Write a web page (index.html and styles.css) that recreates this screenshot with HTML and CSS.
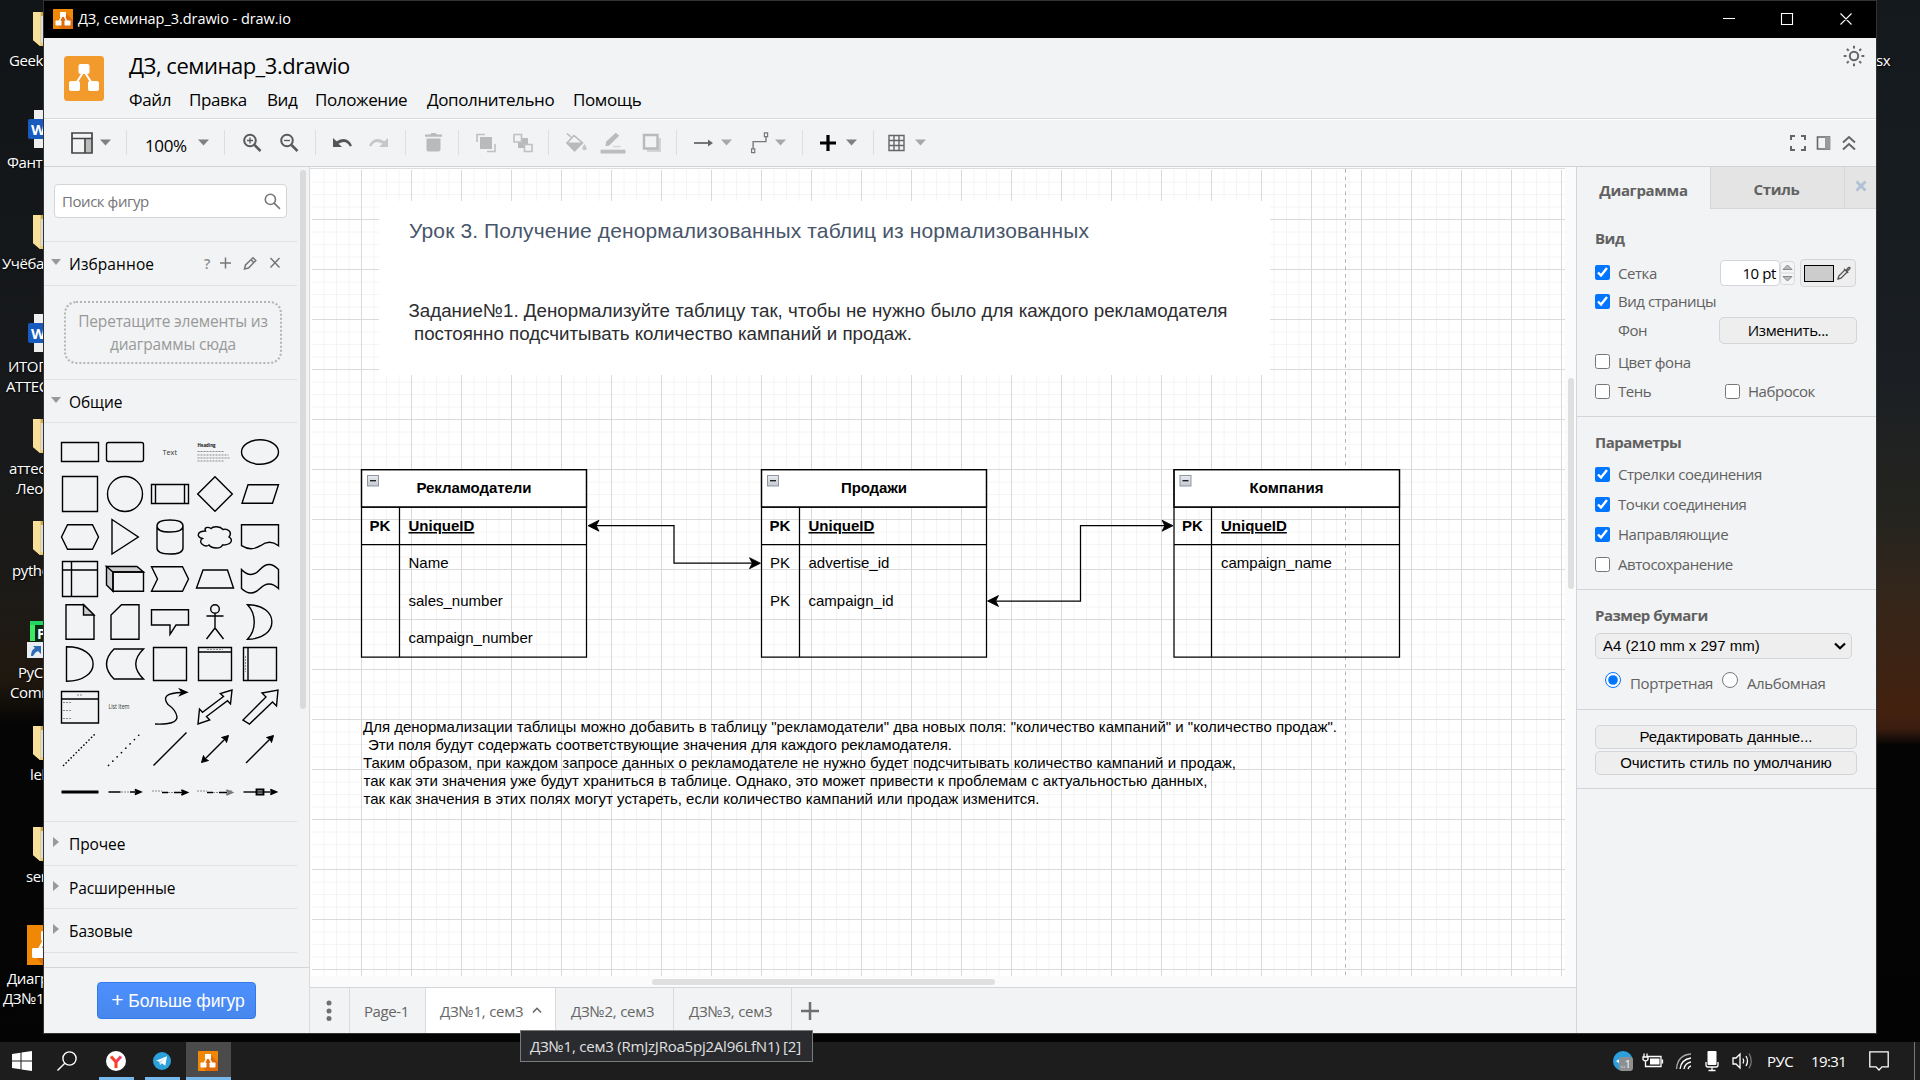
FILE: index.html
```html
<!DOCTYPE html>
<html lang="ru">
<head>
<meta charset="utf-8">
<title>ДЗ, семинар_3.drawio - draw.io</title>
<link rel="stylesheet" href="styles.css">
</head>
<body>
<svg class="defs" width="0" height="0">
  <symbol id="drawio" viewBox="0 0 20 20">
    <rect width="20" height="20" fill="#f08705"/>
    <path d="M12 3.5 20 11v9H8l-4-4.5z" fill="#df6c0c"/>
    <path d="M10 5 5.5 13.5M10 5l4.500 8.500" stroke="#fff" stroke-width="1.500"/>
    <g fill="#fff"><rect x="7" y="3" width="6" height="5" rx=".7"/><rect x="2.500" y="11.500" width="6" height="5" rx=".7"/><rect x="11.500" y="11.500" width="6" height="5" rx=".7"/></g>
  </symbol>
  <symbol id="folder" viewBox="0 0 22 36">
    <path d="M0 1h22v34H7L0 29z" fill="#e9cb79"/><path d="M0 1h7v34L0 29z" fill="#f8e09a"/><path d="M8 4h14v28H8z" fill="#d9dde2"/><path d="M8 1h14v4H8z" fill="#c9a550"/>
  </symbol>
  <symbol id="word" viewBox="0 0 22 38">
    <rect x="6" y="0" width="16" height="38" fill="#eee"/><rect y="9" width="22" height="20" rx="2" fill="#185abd"/>
    <text x="3" y="24.500" font-family="Open Sans" font-weight="700" font-size="15" fill="#fff">W</text>
  </symbol>
  <symbol id="caret" viewBox="0 0 11 7"><path d="M0 .5h11L5.500 6.500z"/></symbol>
</svg>

<main class="desktop">
  <svg class="dicon i1"><use href="#folder"/></svg><span class="dlabel l1">Geek</span>
  <svg class="dicon wd i2"><use href="#word"/></svg><span class="dlabel l2">Фанты</span>
  <svg class="dicon i3"><use href="#folder"/></svg><span class="dlabel l3">Учёба</span>
  <svg class="dicon wd i4"><use href="#word"/></svg><span class="dlabel l4">ИТОГО</span><span class="dlabel l5">АТТЕС</span>
  <svg class="dicon i5"><use href="#folder"/></svg><span class="dlabel l6">аттест</span><span class="dlabel l7">Леон</span>
  <svg class="dicon i6"><use href="#folder"/></svg><span class="dlabel l8">python</span>
  <svg class="dicon i7" viewBox="0 0 22 38"><path d="M3 0h19v20H3z" fill="#3bea62"/><path d="M3 0h19v4H3z" fill="#21d760"/><path d="M8 4h14v18H8z" fill="#0c2a12"/><text x="10" y="18" font-family="Open Sans" font-weight="700" font-size="14" fill="#fff">P</text><path d="M0 21h22v16H0z" fill="#e8edf2"/><path d="m4 35q0-6 4-8l-2-2h8v8l-3-3q-3 1-5 5z" fill="#2c6cb5"/></svg><span class="dlabel l9">PyCharm</span><span class="dlabel l10">Comm</span>
  <svg class="dicon i8"><use href="#folder"/></svg><span class="dlabel l11">lek</span>
  <svg class="dicon i9"><use href="#folder"/></svg><span class="dlabel l12">sem</span>
  <svg class="dicon dio i10"><use href="#drawio"/></svg><span class="dlabel l13">Диагра</span><span class="dlabel l14">ДЗ№1</span>
  <span class="dlabel l15">sx</span>

  <section class="window">
    <header class="titlebar">
      <svg class="app-icon"><use href="#drawio"/></svg>
      <span class="caption">ДЗ, семинар_3.drawio - draw.io</span>
      <svg class="win-buttons" viewBox="0 0 130 14"><path d="M0 6.500h12M58.500 1.500h11v11h-11zM117.500 1.500l11 11M128.500 1.500l-11 11"/></svg>
    </header>

    <div class="head">
      <svg class="logo" viewBox="0 0 40 45"><rect width="40" height="45" rx="3.500" fill="#f29a2b"/><path d="M20 15 11 29M20 15l9 14" stroke="#fff" stroke-width="2"/><g fill="#fff"><rect x="14.500" y="8" width="11" height="10" rx="2"/><rect x="5" y="25" width="11" height="10" rx="2"/><rect x="24" y="25" width="11" height="10" rx="2"/></g></svg>
      <div class="names">
        <h1 class="filename">ДЗ, семинар_3.drawio</h1>
        <nav class="menu"><span class="m1">Файл</span><span class="m2">Правка</span><span class="m3">Вид</span><span class="m4">Положение</span><span class="m5">Дополнительно</span><span>Помощь</span></nav>
      </div>
      <svg class="sun" viewBox="-11 -11 22 22"><circle r="4.200"/><path d="M0-7.500V-10.300M0 7.500v2.800M7.500 0h2.800M-7.500 0h-2.800M5.300 5.300l1.800 1.800M-5.300 5.300l-1.800 1.800M5.300-5.300l1.800-1.800M-5.300-5.300l-1.800-1.800"/></svg>
    </div>

    <div class="toolbar">
      <svg class="t w22" viewBox="0 0 22 22"><path d="M14.500 7h6v13.500h-6z" fill="#bbb"/><path d="M1 1h20v20H1zM1 6.500h20M14 6.500V21" fill="none" stroke="#444" stroke-width="1.700"/></svg>
      <svg class="caret g7"><use href="#caret"/></svg><i class="sep g15"></i>
      <span class="zoom">100%</span><svg class="caret g11"><use href="#caret"/></svg><i class="sep g15"></i>
      <svg class="t w19 g18 dk" viewBox="0 0 19 19"><circle cx="7" cy="7" r="5.800"/><path d="M4 7h6M7 4v6" stroke-width="1.300"/><path d="m11.500 11.500 6 6" stroke-width="2.500"/></svg>
      <svg class="t w19 g18 dk" viewBox="0 0 19 19"><circle cx="7" cy="7" r="5.800"/><path d="M4 7h6" stroke-width="1.300"/><path d="m11.500 11.500 6 6" stroke-width="2.500"/></svg><i class="sep g16"></i>
      <svg class="t w20 g16" viewBox="0 0 20 20"><path d="M1 5v9h9L6.500 10.800Q14 6 17.800 13.500L20 12.800Q15.500 2 4.500 8.300z" fill="#555"/></svg>
      <svg class="t w20 g17" viewBox="0 0 20 20"><path d="M19 5v9h-9l3.500-3.200Q6 6 2.200 13.500L0 12.800Q4.500 2 15.500 8.300z" fill="#c6c7c9"/></svg><i class="sep g16"></i>
      <svg class="t w20 g18" viewBox="0 0 20 20"><path d="M1 1.500h5L7.500 0h4L13 1.500h5v2.300H1zM2.500 5.500h14v11q0 2-2 2h-10q-2 0-2-2z" fill="#b9babc"/></svg><i class="sep g14"></i>
      <svg class="t w20 g17" viewBox="0 0 20 20"><path d="M1 9V1.500h8M19 11v7.500h-8" fill="none" stroke="#bfc0c2" stroke-width="1.600"/><rect x="4" y="4" width="12" height="12" fill="#b9babc"/></svg>
      <svg class="t w20 g17" viewBox="0 0 20 20"><rect x="5" y="5" width="10" height="10" fill="#b9babc"/><path d="M1 1.500h7.500V9H1zM11.500 11.500H19v7h-7.500z" fill="#f1f3f4" stroke="#bfc0c2" stroke-width="1.600"/></svg><i class="sep g15"></i>
      <svg class="t w21 g17" viewBox="0 0 21 21"><path d="m1 1 4 3.500M8 3 1 10.500l7.500 7.800 8-8z" fill="none" stroke="#b9babc" stroke-width="1.600"/><path d="M1 10h15.500l-8 8.300z" fill="#b9babc"/><path d="M18.500 11.500q4.500 6 0 6.200-4.500-.2 0-6.200z" fill="#c6c7c9"/></svg>
      <svg class="t w26 g13" viewBox="0 0 26 23"><path d="m5 15 1-5L16 .8 19.500 4 9 14z" fill="#b9babc"/><path d="M13 15.200h8" stroke="#d5d6d8" stroke-width="1.500"/><path d="M0 20.500h26" stroke="#bcbdbf" stroke-width="4"/></svg>
      <svg class="t w20 g16" viewBox="0 0 20 20"><path d="M5 5h14v14H5z" fill="#d2d3d5"/><path d="M2 2h13.500v13.500H2z" fill="#f1f3f4" stroke="#b9babc" stroke-width="2.400"/></svg><i class="sep g14"></i>
      <svg class="t w20 g17" viewBox="0 0 20 20"><path d="M0 10h16" stroke="#777" stroke-width="2"/><path d="m14 6.500 5 3.500-5 3.500z" fill="#666"/></svg><svg class="caret lt g7"><use href="#caret"/></svg>
      <svg class="t w20 g18" viewBox="0 0 20 24"><path d="M2.500 18v-7.500h14V5" fill="none" stroke="#777" stroke-width="1.500"/><path d="M.8 18.500h3.500v4H.8zM14.800 1h3.500v4h-3.500z" fill="#f1f3f4" stroke="#777" stroke-width="1.300"/></svg><svg class="caret lt g5"><use href="#caret"/></svg><i class="sep g16"></i>
      <svg class="t w16 g17" viewBox="0 0 16 16"><path d="M0 8h16M8 0v16" stroke="#000" stroke-width="3.200"/></svg><svg class="caret g10"><use href="#caret"/></svg><i class="sep g16"></i>
      <svg class="t w17 g14" viewBox="0 0 17 17"><path d="M1 1h15v15H1zM1 6h15M1 11h15M6 1v15M11 1v15" fill="none" stroke="#666" stroke-width="1.400"/></svg><svg class="caret lt g10"><use href="#caret"/></svg>
      <svg class="t right" viewBox="0 0 66 16"><g fill="none" stroke="#666" stroke-width="2"><path d="M1 5V1h4M11 1h4v4M15 11v4h-4M5 15H1v-4"/><path d="M27.500 2h12v12h-12z" stroke-width="1.600"/><path d="m53 7.500 6-5.500 6 5.500M53 14.500 59 9l6 5.500"/></g><path d="M35 2h5v12h-5z" fill="#999"/></svg>
    </div>

    <div class="body">
      <aside class="sidebar">
        <div class="scroll">
          <div class="search"><span>Поиск фигур</span><svg viewBox="0 0 16 16"><circle cx="6" cy="6" r="4.800"/><path d="m9.500 9.500 5.500 5.500"/></svg></div>
          <div class="pal fav"><b class="tri dn"></b><span>Избранное</span>
            <svg class="fav-tools" viewBox="0 0 78 14"><text x="0" y="12.500" font-size="14" font-weight="600" fill="#8b8b8b">?</text><g fill="none" stroke="#777" stroke-width="1.500"><path d="M16 7h11M21.500 1.500v11M66.500 2l9 9.500M75.500 2l-9 9.500"/><path d="m40.500 13 1-4L49 1.700 51.800 4.500 44.500 12zM47 3.800l2.800 2.800"/></g></svg></div>
          <div class="dropwrap"><div class="drop">Перетащите элементы из диаграммы сюда</div></div>
          <div class="pal gen"><b class="tri dn"></b><span>Общие</span></div>
          <div class="shapes">
            <svg viewBox="-22 -21 45 42"><path d="M-18.500-9.500h37v19h-37z"/></svg>
            <svg viewBox="-22 -21 45 42"><rect x="-18.500" y="-9.500" width="37" height="19" rx="2"/></svg>
            <svg viewBox="-22 -21 45 42"><text x="-7.500" y="2.500" font-size="7.500" textLength="14.500" lengthAdjust="spacingAndGlyphs">Text</text></svg>
            <svg viewBox="-22 -21 45 42"><text x="-17.500" y="-5" font-size="5.500" class="hb" textLength="18" lengthAdjust="spacingAndGlyphs">Heading</text><path d="M-17.500-.5h27M-17.500 3h31M-17.500 6h32M-17.500 9h26" class="fine"/></svg>
            <svg viewBox="-22 -21 45 42"><ellipse rx="18.500" ry="12.300"/></svg>

            <svg viewBox="-22 -21 45 42"><path d="M-17.500-17.500h35v35h-35z"/></svg>
            <svg viewBox="-22 -21 45 42"><circle r="17.500"/></svg>
            <svg viewBox="-22 -21 45 42"><path d="M-18.500-9.500h37v19h-37zM-14.500-9.500v19M14.500-9.500v19"/></svg>
            <svg viewBox="-22 -21 45 42"><path d="M0-17.300 17.300 0 0 17.300-17.300 0z"/></svg>
            <svg viewBox="-22 -21 45 42"><path d="M-12-9.200h30.500l-6 18.400H-18z"/></svg>

            <svg viewBox="-22 -21 45 42"><path d="M-12.500-12.300h25L18.500 0l-6 12.300h-25L-18.500 0z"/></svg>
            <svg viewBox="-22 -21 45 42"><path d="M-13-17.500 13.300 0-13 17z"/></svg>
            <svg viewBox="-22 -21 45 42"><path d="M-13-11v22q0 6 13 6t13-6v-22M-13-11q0-6 13-6t13 6-13 6-13-6z"/></svg>
            <svg viewBox="-22 -21 45 42"><path d="M-9.500-6C-18-6-19 0-12.500 1.500-18 5-10 11-6 8-3 12 6 12 7.500 8 16 8 19 3 14 0 18-5 12-9 8-7.500 5-11-2-11-4-8.500-8-11-11-9-9.500-6z"/></svg>
            <svg viewBox="-22 -21 45 42"><path d="M-18.500-12.300h37v21q-9-7-18 0-9.500 6-19 0z"/></svg>

            <svg viewBox="-22 -21 45 42"><path d="M-17.500-17.500h35v35h-35zM-8.500-17.500v35M-17.500-9h35"/></svg>
            <svg viewBox="-22 -21 45 42"><path d="M-18.500-12.500-12-7V12.300L-18.500 6zM-18.500-12.500H12L18.500-7H-12z" fill="#ccc"/><path d="M-12-7h30.500v19.300H-12z"/></svg>
            <svg viewBox="-22 -21 45 42"><path d="M-18.500-12.300H12.500L18.500 0l-6 12.300h-31L-12.500 0z"/></svg>
            <svg viewBox="-22 -21 45 42"><path d="M-12-9h24.500l6 18h-37z"/></svg>
            <svg viewBox="-22 -21 45 42"><path d="M-18.500-9.500q9.500 10 18.500 0t18.500 0v19q-9.500-9-18.500 0t-18.500 0z"/></svg>

            <svg viewBox="-22 -21 45 42"><path d="M-14-17.300H3.500L14-7v24.300h-28z"/><path d="M3.500-17.300V-7H14z" fill="#ccc"/></svg>
            <svg viewBox="-22 -21 45 42"><path d="M-3.500-17.300H14v34.600h-28V-7z"/></svg>
            <svg viewBox="-22 -21 45 42"><path d="M-18.500-12.300h37V3H6L0 12.300V3h-18.500z"/></svg>
            <svg viewBox="-22 -21 45 42"><circle cy="-13" r="4.300"/><path d="M0-8.500V6M-8.500-6h17M-8.500 17 0 6l8.500 11"/></svg>
            <svg viewBox="-22 -21 45 42"><path d="M-12.500-17.300C20-17.300 20 17-12.500 17.300-3.500 8-3.500-8-12.500-17.300z"/></svg>

            <svg viewBox="-22 -21 45 42"><path d="M-13.500-17.300C22-17.300 22 17-13.500 17.300z"/></svg>
            <svg viewBox="-22 -21 45 42"><path d="M-11-15h29.500q-15.500 15 0 30H-11q-15-15 0-30z"/></svg>
            <svg viewBox="-22 -21 45 42"><path d="M-16.500-16.500h33v33h-33z"/></svg>
            <svg viewBox="-22 -21 45 42"><path d="M-16.500-16.500h33v33h-33zM-16.500-12h33"/><path class="fine" d="M-8-14.500H8"/></svg>
            <svg viewBox="-22 -21 45 42"><path d="M-16.500-16.500h33v33h-33zM-12-16.500v33"/><path class="fine" d="M-14.500-8V8"/></svg>

            <svg viewBox="-22 -21 45 42"><path d="M-18.500-15.500h37v31.500h-37zM-18.500-8h37"/><path class="fine" d="M-3-12h6M-17-4.500h9M-17 3.500h9M-17 11.500h9"/></svg>
            <svg viewBox="-22 -21 45 42"><text x="-16.500" y="2" font-size="6.300" textLength="21" lengthAdjust="spacingAndGlyphs">List Item</text></svg>
            <svg viewBox="-22 -21 45 42"><path d="M-15 17Q7 18 7 10 6 3-2-2.500-11-14 12-14.500"/><path d="m17-14.700-7-3 2 3-2 3z" fill="#000"/></svg>
            <svg viewBox="-22 -21 45 42"><path d="m-17 17 1.500-15 3 3.200L8.500-10.500l-3.200-3L17-17l-1.500 14-3-3.200L-8.500 9.500l3.200 3.500z"/></svg>
            <svg viewBox="-22 -21 45 42"><path d="m-17 13 23-23-4-4 16-3-1.500 16-4-4-23 22z"/></svg>

            <svg viewBox="-22 -21 45 42"><path d="M-16.500 16.500 16.500-16.500" class="dot a"/></svg>
            <svg viewBox="-22 -21 45 42"><path d="M-16.500 16.500 16.500-16.500" class="dot b"/></svg>
            <svg viewBox="-22 -21 45 42"><path d="M-16.500 16.500 16.500-16.500"/></svg>
            <svg viewBox="-22 -21 45 42"><path d="M-12 12 12-12"/><path d="m-13.500 13.500 2-7 1.500 3.500 3.500 1.500zM13.500-13.500l-7 2 3.500 1.500 1.500 3.500z" fill="#000" stroke-width="1"/></svg>
            <svg viewBox="-22 -21 45 42"><path d="M-14 14 12-12"/><path d="m13.500-13.500-7 2 3.500 1.500 1.500 3.500z" fill="#000" stroke-width="1"/></svg>

            <svg viewBox="-22 -21 45 42"><path d="M-18.500 0h37" stroke-width="3"/></svg>
            <svg viewBox="-22 -21 45 42"><path d="M-16.500 0h12M5 0h8"/><path class="fine" d="M-4 0h8"/><path d="m16-0-6-2.500L12 0l-2 2.500z" fill="#000"/></svg>
            <svg viewBox="-22 -21 45 42"><path d="M-8 .5h6M4 .5h10"/><path class="fine" d="M-18-1h10M-2 .5h6"/><path d="m17.500.5-6-2.500 2 2.500-2 2.500z" fill="#000"/></svg>
            <svg viewBox="-22 -21 45 42"><path d="M-8 .5h6M4 .5h8"/><path class="fine" d="M-18-1h10M-2 .5h6M12-1h6"/><path d="m17.500.5-6-2.500 2 2.500-2 2.500z" fill="#999" stroke="#777"/></svg>
            <svg viewBox="-22 -21 45 42"><path d="M-16.500 0h31"/><path d="M-3.500-2.500h7v5h-7z" stroke-width="1.800"/><path d="m16.500 0-6-2.500 2 2.500-2 2.500z" fill="#000"/></svg>
          </div>
          <div class="pal"><b class="tri rt"></b><span>Прочее</span></div>
          <div class="pal short"><b class="tri rt"></b><span>Расширенные</span></div>
          <div class="pal"><b class="tri rt"></b><span>Базовые</span></div>
          <div class="rest"></div>
          <i class="thumb"></i>
        </div>
        <footer class="more"><button><b>+</b> Больше фигур</button></footer>
      </aside>

      <section class="center">
        <svg class="canvas" viewBox="310 167 1266 820">
          <defs>
            <pattern id="grid" x="361" y="219" width="50" height="50" patternUnits="userSpaceOnUse">
              <path d="M13 0v50M25.500 0v50M38 0v50M0 13h50M0 25.500h50M0 38h50" stroke="#f4f4f4"/>
              <path d="M.5 0v50M0 .5h50" stroke="#dadada"/>
            </pattern>
            <linearGradient id="fold" x2="0" y2="1"><stop stop-color="#e8ebf0"/><stop offset="1" stop-color="#c3c8d0"/></linearGradient>
            <g id="collapse"><rect x=".5" y=".5" width="11" height="10.500" fill="url(#fold)" stroke="#8e96a3"/><path d="M3 5.700h6" stroke="#222" stroke-width="1.400"/></g>
          </defs>
          <path d="M310 167h1266v820H310z" fill="#fbfbfb"/>
          <path d="M311 169h1254v807H311z" fill="#fff"/>
          <path d="M312 170h1253v806H312z" fill="url(#grid)"/>
          <path d="M310 168.500h1255" stroke="#dcdddf"/>
          <path d="M1345.500 169v807" stroke="#b4b4b4" stroke-dasharray="3.750 3.750"/>
          <path d="M379 201h891v174H379z" fill="#fff"/>
          <text class="lesson" x="409" y="237.500" textLength="680">Урок 3. Получение денормализованных таблиц из нормализованных</text>
          <g class="task"><text x="408.500" y="317" textLength="819">Задание№1. Денормализуйте таблицу так, чтобы не нужно было для каждого рекламодателя</text>
          <text x="414" y="340" textLength="498">постоянно подсчитывать количество кампаний и продаж.</text></g>
          <g class="tbl">
            <path d="M361.500 469.500h225V507h-225zM761.500 469.500h225V507h-225zM1174 469.500h225.500V507H1174z" fill="#fff"/>
            <path d="M361.500 469.500h225v187.500h-225zM361.500 507h225M361.500 544.500h225M399.500 507v150M761.500 469.500h225v187.500h-225zM761.500 507h225M761.500 544.500h225M799.500 507v150M1174 469.500h225.500v187.500H1174zM1174 507h225.500M1174 544.500h225.500M1211.500 507v150" />
            <path d="M594 525.700h80v37.500h80M994 601h86.500v-75.300h86"/>
            <path d="m588 525.700 11-5.500-2.800 5.500 2.800 5.500zM760.500 563.200l-11-5.500 2.800 5.500-2.800 5.500zM987.500 601l11-5.500-2.800 5.500 2.800 5.500zM1173 525.700l-11-5.500 2.800 5.500-2.800 5.500z" fill="#000" stroke-width=".8"/>
          </g>
          <use href="#collapse" x="367" y="475"/><use href="#collapse" x="767" y="475"/><use href="#collapse" x="1179.500" y="475"/>
          <g class="txt b">
            <text x="416.500" y="493" textLength="115">Рекламодатели</text><text x="841" y="493" textLength="66">Продажи</text><text x="1249.500" y="493" textLength="74">Компания</text>
            <text x="369.500" y="531">PK</text><text x="769.500" y="531">PK</text><text x="1182" y="531">PK</text>
            <g text-decoration="underline"><text x="408.500" y="531">UniqueID</text><text x="808.500" y="531">UniqueID</text><text x="1221" y="531">UniqueID</text></g>
          </g>
          <g class="txt">
            <text x="408.500" y="568">Name</text><text x="408.500" y="606">sales_number</text><text x="408.500" y="643">campaign_number</text>
            <text x="770" y="568">PK</text><text x="770" y="606">PK</text><text x="808.500" y="568">advertise_id</text><text x="808.500" y="606">campaign_id</text>
            <text x="1221" y="568">campaign_name</text>
            <text x="363" y="732" textLength="974">Для денормализации таблицы можно добавить в таблицу "рекламодатели" два новых поля: "количество кампаний" и "количество продаж".</text>
            <text x="368" y="750" textLength="584">Эти поля будут содержать соответствующие значения для каждого рекламодателя.</text>
            <text x="363" y="768" textLength="873">Таким образом, при каждом запросе данных о рекламодателе не нужно будет подсчитывать количество кампаний и продаж,</text>
            <text x="363.500" y="786" textLength="844">так как эти значения уже будут храниться в таблице. Однако, это может привести к проблемам с актуальностью данных,</text>
            <text x="363.500" y="804" textLength="676">так как значения в этих полях могут устареть, если количество кампаний или продаж изменится.</text>
          </g>
          <rect x="1568" y="378" width="6" height="211" rx="3" fill="#dfdfdf"/>
          <rect x="652" y="979" width="343" height="6" rx="3" fill="#dfdfdf"/>
        </svg>
        <div class="pages">
          <svg class="dots" viewBox="0 0 6 22"><circle cx="3" cy="3" r="2.500"/><circle cx="3" cy="11" r="2.500"/><circle cx="3" cy="18.500" r="2.500"/></svg>
          <span class="pg p1">Page-1</span>
          <span class="pg p2">ДЗ№1, сем3 <svg viewBox="0 0 10 6"><path d="M1 5.500 5 1.300 9 5.500"/></svg></span>
          <span class="pg p3">ДЗ№2, сем3</span><span class="pg p4">ДЗ№3, сем3</span>
          <svg class="add" viewBox="0 0 18 18"><path d="M0 9h18M9 0v18"/></svg>
        </div>
      </section>

      <aside class="format">
        <div class="tabs"><span class="on">Диаграмма</span><span class="off">Стиль</span><span class="cl"><svg viewBox="0 0 12 12"><path d="m1.500 1.500 9 9M10.500 1.500l-9 9"/></svg></span></div>
        <section class="s1">
          <h2>Вид</h2>
          <div class="row r1"><label><input type="checkbox" checked>Сетка</label>
            <span class="num">10 pt</span><svg class="spin" viewBox="0 0 15 24"><rect x=".5" y=".5" width="14" height="23" rx="3" fill="#f3f4f5" stroke="#d8dadc"/><path d="M.5 12h14" stroke="#d8dadc"/><path d="m3 8.500 4.500-4.500L12 8.500zM3 15.500h9L7.500 20z" fill="#bbb" stroke="#888"/></svg>
            <span class="color"><i></i><svg viewBox="0 0 14 14"><path d="M1 13l.8-3L8 3.800 10.200 6 4 12.200zM7 2.800 11.200 7M9 4.500 11.500 1.500Q12.800.8 13 2.500L10 5.500" fill="none" stroke="#555" stroke-width="1.300"/></svg></span></div>
          <div class="row r2"><label><input type="checkbox" checked>Вид страницы</label></div>
          <div class="row r3"><label class="nobox">Фон</label><button class="change">Изменить...</button></div>
          <div class="row r4"><label><input type="checkbox">Цвет фона</label></div>
          <div class="row"><label class="half"><input type="checkbox">Тень</label><label><input type="checkbox">Набросок</label></div>
        </section>
        <section class="s2">
          <h2>Параметры</h2>
          <div class="row"><label><input type="checkbox" checked>Стрелки соединения</label></div>
          <div class="row"><label><input type="checkbox" checked>Точки соединения</label></div>
          <div class="row"><label><input type="checkbox" checked>Направляющие</label></div>
          <div class="row"><label><input type="checkbox">Автосохранение</label></div>
        </section>
        <section class="s3">
          <h2>Размер бумаги</h2>
          <div class="select"><span>A4 (210 mm x 297 mm)</span><svg viewBox="0 0 12 8"><path d="m1 1.500 5 4.800 5-4.800"/></svg></div>
          <div class="radios"><label class="ra"><input type="radio" name="o" checked><span>Портретная</span></label><label><input type="radio" name="o"><span>Альбомная</span></label></div>
        </section>
        <section class="s4"><button>Редактировать данные...</button><button>Очистить стиль по умолчанию</button></section>
      </aside>
    </div>
  </section>

  <footer class="taskbar">
    <svg class="start" viewBox="0 0 20 20"><path d="m0 3 8.500-1.200v7.700H0zM9.500 1.600 20 0v9.500H9.500zM0 10.500h8.500v7.700L0 17zM9.500 10.500H20V20L9.500 18.400z" fill="#fff"/></svg>
    <svg class="find" viewBox="0 0 20 20"><circle cx="12.500" cy="7.500" r="6.600"/><path d="M7.800 12.300.5 19.500"/></svg>
    <span class="app a1"><svg viewBox="0 0 20 20"><circle cx="10" cy="10" r="10" fill="#fff"/><path d="M5 5.500 10 11v6" fill="none" stroke="#fc3f1d" stroke-width="3"/><path d="m10 11 5-5.500" stroke="#f33b6a" stroke-width="3"/></svg></span>
    <span class="app a2"><svg viewBox="0 0 20 20"><circle cx="10" cy="10" r="9" fill="#2aa1da"/><path d="M4 9.800 15 5.200 13.300 14.800 9.800 12.300 8 14 7.500 10.800z" fill="#fff"/><path d="m7.500 10.800 6-4.200-4.500 5-1 2.400z" fill="#b9daec"/></svg></span>
    <span class="app a3"><svg><use href="#drawio"/></svg></span>
    <div class="tray">
      <svg class="icons" viewBox="0 0 140 22"><circle cx="10" cy="11" r="10" fill="#2ba0dd"/><path d="m3 11 4-2v5z" fill="#fff"/><rect x="6" y="7" width="14" height="14" rx="3" fill="#8d8f91"/><text x="12" y="17.500" font-size="10" fill="#fff">1</text><path d="M8 17h1.500M10.500 17H12" stroke="#ddd"/>
        <g fill="none" stroke="#fff" stroke-width="1.300"><path d="M34 6.500h14v10H36M49.500 9.500v4"/><path d="M31 3.500v3M34 3.500v3M30 7h5v2.500q-2.500 3-5 0zM32.500 11v5.500H36"/><path d="M63.500 19Q64.500 5 78 4" stroke="#aaa"/><path d="M67 19q1-9.500 11-11M71 19q1-6 7-7M75 19q.5-2.500 3-3"/></g>
        <path d="M37 8.500h9.500v6H37z" fill="#fff"/><rect x="94.500" y="1" width="9" height="14" rx="1" fill="#fff"/><path d="M93 12v3q0 2 2 2h8q2 0 2-2v-3M99 17v3.500M95.500 20.500h7" stroke="#fff" stroke-width="1.300" fill="none"/>
        <path d="M120 8h3l4-4v14l-4-4h-3zM130 8.500q1.500 2.500 0 5M133 6q3 5 0 10" fill="none" stroke="#fff" stroke-width="1.300"/><path d="M136 3.500q4.500 7.500 0 15" fill="none" stroke="#777" stroke-width="1.300"/></svg>
      <span class="lang">РУС</span><span class="clock">19:31</span>
      <svg class="note" viewBox="0 0 20 20"><path d="M.8.800h18.400v15H13l-3 3.200-3-3.200H.8z"/></svg><i class="peek"></i>
    </div>
  </footer>
  <div class="tooltip">ДЗ№1, сем3 (RmJzJRoa5pj2Al96LfN1) [2]</div>
</main>
</body>
</html>
```
FILE: styles.css
```css
* { box-sizing: border-box; }
body { margin: 0; font: 15px/20px "Open Sans", "Noto Sans", sans-serif; letter-spacing: -0.4px; color: #000; overflow: hidden; }
svg { display: block; flex: none; overflow: visible; }
.defs { position: absolute; }
button { font: inherit; letter-spacing: inherit; padding: 0; }
h1, h2 { margin: 0; }

.desktop {
  position: relative; width: 1920px; height: 1080px; overflow: hidden;
  background:
    linear-gradient(to bottom, #14191e 0, #1b1f23 35%, #25241f 48%, #36261a 56%, #43210f 66%, #3a1d10 67.500%, #040404 69%, #030303 100%) right / 960px 100% no-repeat,
    linear-gradient(to bottom, #121518 0, #17191b 40%, #1c1a17 55%, #20180f 63%, #050505 67%, #040404 100%);
}
.dicon { position: absolute; left: 33px; width: 22px; height: 36px; }
.dicon.wd { left: 28px; height: 38px; }
.dicon.dio { left: 27px; width: 40px; height: 40px; }
.dlabel { position: absolute; color: #fff; white-space: nowrap; font-size: 15px; text-shadow: 1px 1px 2px #000; }
.i1 { top: 11px; } .i2 { top: 110px; } .i3 { top: 214px; } .i4 { top: 314px; } .i5 { top: 418px; }
.i6 { top: 520px; } .i7 { top: 621px; } .i8 { top: 725px; } .i9 { top: 826px; } .i10 { top: 925px; }
.dicon.i7 { left: 27px; height: 38px; }
.l1 { left: 9px; top: 50px; } .l2 { left: 7px; top: 152px; } .l3 { left: 2px; top: 253px; }
.l4 { left: 8px; top: 356px; } .l5 { left: 6px; top: 376px; } .l6 { left: 9px; top: 458px; } .l7 { left: 16px; top: 478px; }
.l8 { left: 12px; top: 560px; } .l9 { left: 18px; top: 662px; } .l10 { left: 10px; top: 682px; } .l11 { left: 30px; top: 764px; }
.l12 { left: 26px; top: 866px; } .l13 { left: 7px; top: 968px; } .l14 { left: 3px; top: 988px; } .l15 { left: 1876px; top: 50px; }

.window { position: absolute; left: 44px; top: 1px; width: 1832px; height: 1032px; background: #f1f3f4; display: flex; flex-direction: column; box-shadow: 0 0 0 1px #333; }
.titlebar { height: 37px; background: #000; color: #fff; display: flex; align-items: center; padding: 0 23px 1px 9px; }
.app-icon { width: 20px; height: 20px; }
.caption { margin-left: 5px; flex: 1; font-size: 14.500px; letter-spacing: -0.05px; }
.win-buttons { width: 130px; height: 14px; fill: none; stroke: #fff; stroke-width: 1.100; }
.head { height: 81px; display: flex; padding: 18px 11px 0 20px; border-bottom: 1px solid #d8dadd; }
.logo { width: 40px; height: 45px; }
.names { flex: 1; margin-left: 25px; margin-top: -5px; }
.filename { font-weight: 400; font-size: 22px; line-height: 28px; letter-spacing: -0.48px; }
.menu { display: flex; margin-top: 9px; font-size: 17px; line-height: 24px; letter-spacing: -0.38px; }
.menu span { white-space: nowrap; }
.m1 { width: 60px; } .m2 { width: 78px; } .m3 { width: 48px; } .m4 { width: 112px; } .m5 { width: 146px; }
.sun { width: 22px; height: 22px; margin-top: -11px; fill: none; stroke: #666; stroke-width: 2; }

.toolbar { height: 48px; border-top: 1px solid #fff; border-bottom: 1px solid #d0d2d4; display: flex; align-items: center; padding: 0 0 1px 27px; }
.t { height: 22px; }
.dk { fill: none; stroke: #5a5a5a; stroke-width: 2; }
.w16 { width: 16px; } .w17 { width: 17px; } .w19 { width: 19px; } .w20 { width: 20px; } .w21 { width: 21px; } .w22 { width: 22px; } .w26 { width: 26px; }
.caret { width: 11px; height: 7px; fill: #808080; }
.caret.lt { fill: #a8a8a8; }
.sep { width: 1px; height: 25px; background: #dcdee0; flex: none; }
.g5 { margin-left: 5px; } .g7 { margin-left: 7px; } .g10 { margin-left: 10px; } .g11 { margin-left: 11px; } .g13 { margin-left: 13px; }
.g14 { margin-left: 14px; } .g15 { margin-left: 15px; } .g16 { margin-left: 16px; } .g17 { margin-left: 17px; } .g18 { margin-left: 18px; }
.zoom { width: 42px; margin-left: 18px; margin-top: 6px; font-size: 17px; letter-spacing: -0.4px; }
.right { width: 66px; height: 16px; margin: 0 20px 0 auto; }

.body { flex: 1; display: flex; min-height: 0; }
.sidebar { width: 266px; border-right: 1px solid #d8dadd; display: flex; flex-direction: column; }
.scroll { position: relative; height: 800px; }
.search { margin: 17px 0 23px 10px; width: 233px; height: 34px; border: 1px solid #d3d5d8; border-radius: 4px; background: #fff; color: #757575; display: flex; align-items: center; justify-content: space-between; padding: 0 4px 0 7px; letter-spacing: -0.45px; }
.search svg { width: 17px; height: 17px; margin-right: 1px; fill: none; stroke: #777; stroke-width: 1.500; }
.pal, .dropwrap, .shapes, .rest { width: 253px; border-top: 1px solid #dfe1e3; }
.pal { height: 44px; display: flex; align-items: center; padding-top: 1px; font-weight: 500; font-size: 15.500px; letter-spacing: -0.1px; }
.fav { letter-spacing: 0.05px; }
.pal.fav > span { letter-spacing: 0.1px; }
.pal.gen, .pal.short { height: 43px; }
.pal span { margin-left: 9px; }
.tri { width: 16px; height: 0; flex: none; position: relative; top: -3px; }
.tri::before { content: ""; display: block; position: relative; width: 0; height: 0; }
.dn::before { left: 7px; top: -2px; border: 5px solid transparent; border-top: 6px solid #999; border-bottom: 0; }
.rt::before { left: 9px; top: -4px; border: 5px solid transparent; border-left: 6px solid #999; border-right: 0; }
.fav-tools { width: 78px; height: 14px; margin-left: auto; margin-right: 15px; margin-top: -3px; }
.dropwrap { height: 94px; padding: 15px 15px 0 20px; }
.drop { height: 63px; border: 2px dotted #b5b5b5; border-radius: 12px; color: #999; text-align: center; font-size: 15.500px; line-height: 22.500px; padding: 7px 8px; letter-spacing: -0.18px; }
.shapes { height: 399px; display: grid; grid-template-columns: repeat(5, 45px); grid-auto-rows: 42.450px; padding: 8px 0 0 14px; }
.shapes svg { width: 45px; height: 42px; fill: none; stroke: #000; stroke-width: 1.400; }
.shapes text { fill: #333; stroke: none; letter-spacing: 0; }
.shapes .hb { font-weight: 700; fill: #111; }
.shapes .fine { stroke: #8a8a8a; stroke-width: 1; stroke-dasharray: 2 1; }
.shapes .dot { stroke-width: 1.600; stroke-linecap: round; }
.shapes .a { stroke-dasharray: .1 3.500; }
.shapes .b { stroke-dasharray: .1 6; }
.thumb { position: absolute; left: 256px; top: 3px; width: 6px; height: 539px; border-radius: 3px; background: #d9dadc; }
.more { flex: 1; border-top: 1px solid #d3d5d8; padding: 14px 0 0 53px; }
.more button { width: 159px; height: 37px; border: 1px solid #3079ed; border-radius: 4px; color: #fff; background: linear-gradient(#4d90fe, #4787ed); font: 17.500px "Liberation Sans", Arial, sans-serif; letter-spacing: -0.1px; padding: 0 0 2px 3px; white-space: nowrap; }
.more b { font: 21px "Liberation Sans", Arial, sans-serif; }

.center { width: 1266px; display: flex; flex-direction: column; }
.canvas { width: 1266px; height: 820px; font-family: "Liberation Sans", Arial, sans-serif; letter-spacing: 0; }
.lesson { font-size: 21px; fill: #475569; }
.task { font-size: 18.750px; fill: #2c2d30; }
.tbl { fill: none; stroke: #000; stroke-width: 1.250; }
.txt { font-size: 15px; }
.b { font-weight: 700; }
.pages { flex: 1; border-top: 1px solid #d3d5d8; display: flex; align-items: center; color: #666; }
.dots { width: 6px; height: 22px; margin: 0 17px 0 16px; fill: #707070; }
.pg { height: 100%; border-left: 1px solid #d8dadd; display: flex; align-items: center; padding-left: 14px; white-space: nowrap; letter-spacing: -0.25px; }
.p1 { width: 76px; letter-spacing: -0.4px; } .p2 { width: 130px; background: #fff; } .p3 { width: 118px; padding-left: 15px; } .p4 { width: 119px; padding-left: 15px; border-right: 1px solid #d8dadd; }
.p2 svg { width: 10px; height: 6px; margin-left: 9px; margin-top: -2px; fill: none; stroke: #666; stroke-width: 1.600; }
.add { width: 18px; height: 18px; margin-left: 9px; stroke: #707070; stroke-width: 2.500; }

.format { flex: 1; border-left: 1px solid #d3d5d8; color: #616161; }
.tabs { display: flex; height: 42px; font-weight: 700; text-align: center; letter-spacing: -0.35px; line-height: 46px; }
.on { width: 133px; }
.off, .cl { background: #e4e4e4; border-left: 1px solid #d6d7db; border-bottom: 1px solid #d6d7db; line-height: 44px; }
.off { width: 134px; padding-right: 2px; }
.cl { flex: 1; padding: 13px 0 0 10px; }
.cl svg { width: 12px; height: 12px; stroke: #b0c0d6; stroke-width: 2.800; }
.format section { border-bottom: 1px solid #d3d5d8; padding-left: 18px; }
h2 { font-size: 15px; line-height: 24px; letter-spacing: -0.5px; }
.row { display: flex; align-items: center; height: 30px; }
.row label { display: flex; align-items: center; white-space: nowrap; letter-spacing: -0.45px; }
.row input { width: 15px; height: 15px; margin: 0 8px 0 0; }
.row .nobox { padding-left: 23px; width: 124px; }
.half { width: 130px; }
.s1 { height: 208px; padding-top: 17px; }
.r1 { height: 28px; margin-top: 9px; }
.r1 label { width: 125px; padding-bottom: 1px; }
.r2 { height: 28px; }
.r3 { height: 31px; }
.r3 label { padding-bottom: 1px; }
.r4 label { padding-top: 1px; }
.num { width: 60px; height: 26px; border: 1px solid #d3d5d8; border-radius: 4px; background: #fff; color: #000; text-align: right; padding-right: 3px; line-height: 25px; }
.spin { width: 15px; height: 24px; }
.color { width: 56px; height: 28px; margin-left: 5px; border: 1px solid #d3d5d8; border-radius: 4px; background: #eee; display: flex; align-items: center; justify-content: space-between; padding: 0 4px 0 3px; }
.color i { width: 30px; height: 17px; border: 1px solid #000; background: #ccc; }
.color svg { width: 14px; height: 14px; }
.format button { border: 1px solid #d3d5d8; border-radius: 5px; background: #eee; color: #000; }
.change { width: 138px; height: 27px; padding-bottom: 2px; }
.s2 { height: 173px; padding-top: 13px; }
.s2 h2 { margin-bottom: 5px; }
.s3 { height: 120px; padding-top: 13px; }
.select { margin-top: 6px; width: 257px; height: 26px; border: 1px solid #d3d5d8; border-radius: 5px; background: #eee; color: #000; display: flex; align-items: center; justify-content: space-between; padding: 0 5px 0 7px; font: 15px "Liberation Sans", Arial, sans-serif; letter-spacing: 0; }
.select span { margin-top: -1px; }
.select svg { width: 12px; height: 8px; fill: none; stroke: #000; stroke-width: 2.200; }
.radios { display: flex; margin-top: 10px; height: 26px; padding-left: 10px; }
.radios label { display: flex; align-items: flex-start; }
.radios input { width: 16px; height: 16px; margin: 3px 9px 0 0; }
.radios span { margin-top: 4px; }
.ra { width: 117px; }
.s4 { height: 79px; padding-top: 15px; display: grid; grid-auto-rows: 24px; row-gap: 2px; }
.s4 button { width: 262px; font: 15px "Liberation Sans", Arial, sans-serif; letter-spacing: 0; padding-bottom: 1px; }

.taskbar { position: absolute; left: 0; top: 1042px; width: 1920px; height: 38px; background: #1d1d1d; display: flex; align-items: center; color: #fff; }
.start { width: 20px; height: 20px; margin-left: 12px; }
.find { width: 20px; height: 20px; margin-left: 25px; fill: none; stroke: #fff; stroke-width: 1.400; }
.app { height: 38px; border-bottom: 3px solid #76b9ed; display: flex; justify-content: center; align-items: center; padding-top: 2px; }
.app svg { width: 20px; height: 20px; }
.a1, .a2 { width: 35px; padding-right: 1px; }
.a1 { margin-left: 22px; } .a2 { margin-left: 11px; } .a3 { width: 45px; margin-left: 6px; padding-right: 1px; background: #4b4b4b; }
.tray { margin-left: auto; display: flex; align-items: center; height: 38px; }
.icons { width: 140px; height: 22px; }
.lang { margin-left: 14px; width: 44px; letter-spacing: -0.5px; }
.clock { width: 58px; letter-spacing: -0.6px; }
.note { width: 20px; height: 20px; fill: none; stroke: #fff; stroke-width: 1.300; }
.peek { width: 1px; height: 38px; background: #777; margin: 0 5px 0 25px; }
.tooltip { position: absolute; left: 520px; top: 1030px; width: 293px; height: 32px; border: 1px solid #7b7b7b; background: #2a2b2f; color: #e0e0e0; line-height: 30px; padding-left: 9px; white-space: nowrap; letter-spacing: -0.22px; }
```
